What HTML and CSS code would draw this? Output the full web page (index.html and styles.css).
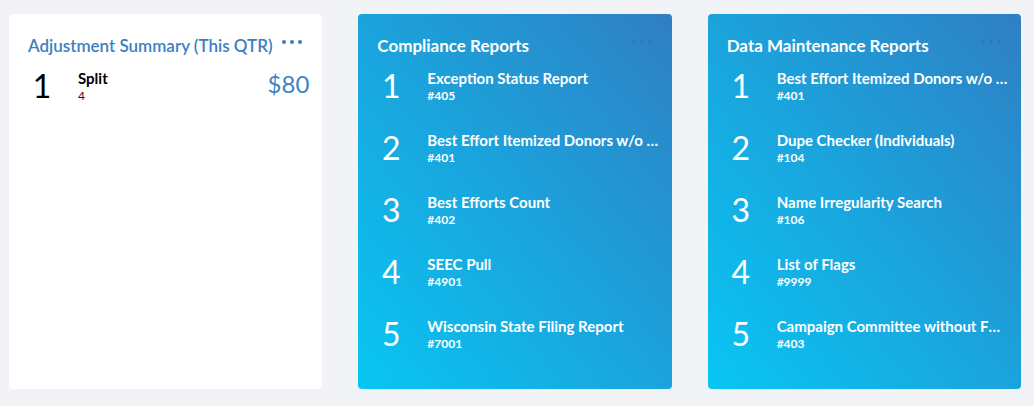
FILE: index.html
```html
<!DOCTYPE html>
<html lang="en">
<head>
    <meta charset="UTF-8">
    <title>Dashboard</title>
    <link rel="stylesheet" href="styles.css">
</head>
<body>
    <div class="board">
        <!-- Adjustment summary -->
        <div class="card card-plain">
            <div class="card-head">
                <h2 class="card-title">Adjustment Summary (This QTR)</h2>
                <span class="more"><i></i><i></i><i></i></span>
            </div>
            <ul class="rank-list">
                <li class="rank-row">
                    <span class="rank-num">1</span>
                    <div class="rank-text">
                        <div class="rank-name">Split</div>
                        <div class="rank-sub">4</div>
                    </div>
                    <span class="rank-amount">$80</span>
                </li>
            </ul>
        </div>

        <div class="card card-blue">
            <div class="card-head">
                <h2 class="card-title">Compliance Reports</h2>
                <span class="more"><i></i><i></i><i></i></span>
            </div>
            <ul class="rank-list">
                <li class="rank-row">
                    <span class="rank-num">1</span>
                    <div class="rank-text">
                        <div class="rank-name">Exception Status Report</div>
                        <div class="rank-sub">#405</div>
                    </div>
                </li>
                <li class="rank-row">
                    <span class="rank-num">2</span>
                    <div class="rank-text">
                        <div class="rank-name">Best Effort Itemized Donors w/o Occupation</div>
                        <div class="rank-sub">#401</div>
                    </div>
                </li>
                <li class="rank-row">
                    <span class="rank-num">3</span>
                    <div class="rank-text">
                        <div class="rank-name">Best Efforts Count</div>
                        <div class="rank-sub">#402</div>
                    </div>
                </li>
                <li class="rank-row">
                    <span class="rank-num">4</span>
                    <div class="rank-text">
                        <div class="rank-name">SEEC Pull</div>
                        <div class="rank-sub">#4901</div>
                    </div>
                </li>
                <li class="rank-row">
                    <span class="rank-num">5</span>
                    <div class="rank-text">
                        <div class="rank-name">Wisconsin State Filing Report</div>
                        <div class="rank-sub">#7001</div>
                    </div>
                </li>
            </ul>
        </div>

        <div class="card card-blue">
            <div class="card-head">
                <h2 class="card-title">Data Maintenance Reports</h2>
                <span class="more"><i></i><i></i><i></i></span>
            </div>
            <ul class="rank-list">
                <li class="rank-row">
                    <span class="rank-num">1</span>
                    <div class="rank-text">
                        <div class="rank-name">Best Effort Itemized Donors w/o Occupation</div>
                        <div class="rank-sub">#401</div>
                    </div>
                </li>
                <li class="rank-row">
                    <span class="rank-num">2</span>
                    <div class="rank-text">
                        <div class="rank-name">Dupe Checker (Individuals)</div>
                        <div class="rank-sub">#104</div>
                    </div>
                </li>
                <li class="rank-row">
                    <span class="rank-num">3</span>
                    <div class="rank-text">
                        <div class="rank-name">Name Irregularity Search</div>
                        <div class="rank-sub">#106</div>
                    </div>
                </li>
                <li class="rank-row">
                    <span class="rank-num">4</span>
                    <div class="rank-text">
                        <div class="rank-name">List of Flags</div>
                        <div class="rank-sub">#9999</div>
                    </div>
                </li>
                <li class="rank-row">
                    <span class="rank-num">5</span>
                    <div class="rank-text">
                        <div class="rank-name">Campaign Committee without FEC ID</div>
                        <div class="rank-sub">#403</div>
                    </div>
                </li>
            </ul>
        </div>
    </div>
</body>
</html>
```

FILE: styles.css
```css
body {
    margin: 0;
    background-color: #f2f3f7;
    font-family: 'Lato', 'Liberation Sans', sans-serif;
}
.board {
    display: grid;
    grid-template-columns: repeat(3, 1fr);
    gap: 36px;
    padding: 14px 13px 17px 9px;
    height: 406px;
    box-sizing: border-box;
}
.card {
    border-radius: 4px;
    padding: 19px 13px 0 19px;
    min-width: 0;
}
.card-plain {
    background-color: #ffffff;
}
.card-blue {
    background: linear-gradient(to top right, #08c6f3 0%, #1ba3dc 50%, #2f7fc3 100%);
    color: white;
}
.card-head {
    display: flex;
    align-items: center;
    justify-content: space-between;
    height: 24px;
}
.card-title {
    margin: 0;
    font-size: 17px;
    font-weight: bold;
    white-space: nowrap;
}
.card-plain .card-title {
    color: #3b7fc2;
    font-weight: 600;
}
.more {
    display: flex;
    gap: 4px;
    margin-right: 7px;
    margin-top: -6px;
}
.more i {
    width: 4px;
    height: 4px;
    border-radius: 50%;
    background-color: #3b7fc2;
}
.card-blue .more i {
    background-color: rgba(40, 110, 180, 0.45);
}
.rank-list {
    list-style: none;
    margin: 12px 0 0;
    padding: 0;
    display: flex;
    flex-direction: column;
    gap: 26px;
}
.rank-row {
    display: flex;
    align-items: flex-start;
    height: 36px;
}
.rank-num {
    align-self: center;
    width: 28px;
    margin-right: 22px;
    text-align: center;
    font-size: 32px;
    line-height: 36px;
    margin-top: -3px;
    flex-shrink: 0;
}
.card-plain .rank-num {
    color: black;
}
.rank-text {
    flex: 1;
    min-width: 0;
}
.rank-name {
    font-size: 15px;
    font-weight: bold;
    white-space: nowrap;
    overflow: hidden;
    text-overflow: ellipsis;
    line-height: 18px;
}
.rank-sub {
    font-size: 12px;
    font-weight: bold;
    margin-top: 2px;
    line-height: 14px;
}
.card-plain .rank-name {
    color: black;
}
.card-plain .rank-sub {
    font-weight: normal;
    color: #2b0d22;
}
.rank-amount {
    align-self: center;
    font-size: 24px;
    color: #3d84c6;
    margin-top: -8px;
}
```
